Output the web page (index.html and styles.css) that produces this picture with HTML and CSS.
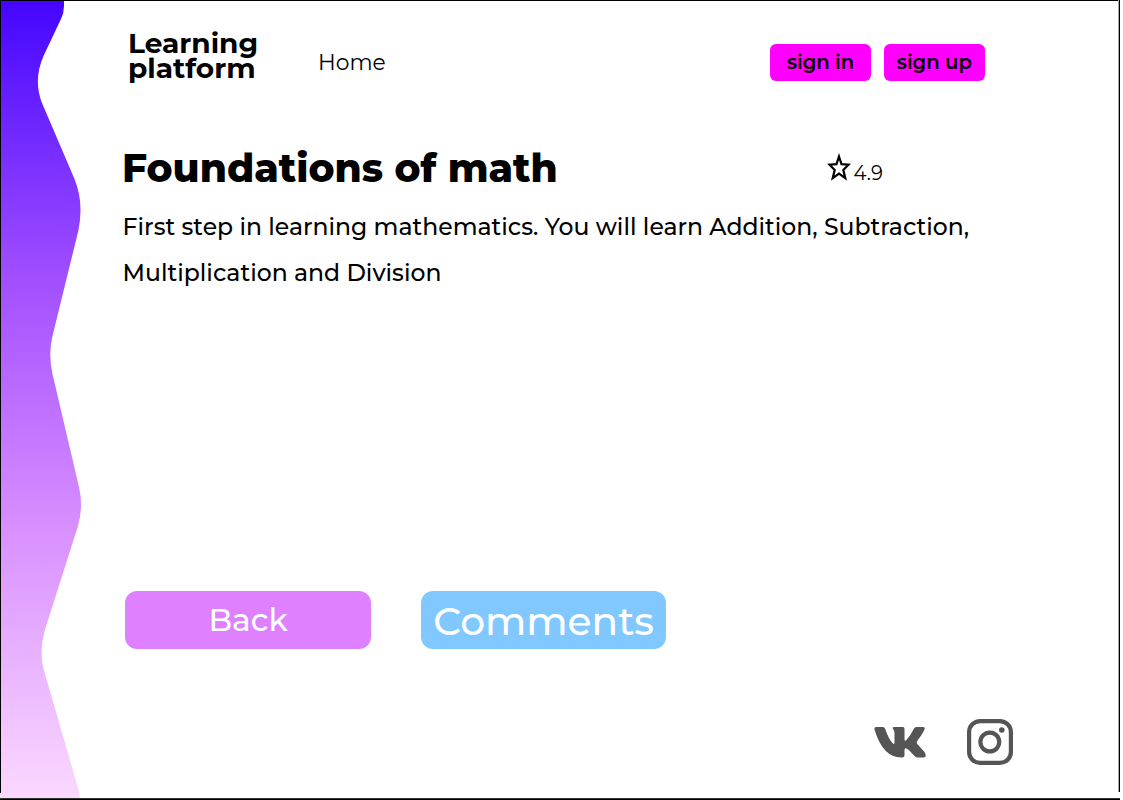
FILE: index.html
```html
<!DOCTYPE html>
<html lang="en">
<head>
<meta charset="utf-8">
<title>Learning platform</title>
<link rel="stylesheet" href="styles.css">
</head>
<body>
<div class="page">
  <svg class="wave" width="84" height="800" viewBox="0 0 84 800" aria-hidden="true">
    <defs>
      <linearGradient id="waveFill" x1="0" y1="0" x2="0" y2="1">
        <stop offset="0" stop-color="#4405ff"/>
        <stop offset="0.34" stop-color="#9f4dff"/>
        <stop offset="0.66" stop-color="#d88fff"/>
        <stop offset="1" stop-color="#fad8ff"/>
      </linearGradient>
    </defs>
    <path fill="url(#waveFill)" d="M0 0H64V6Q64 13 61 19L43.500 56Q33 80 42 103L74.500 179Q84 202 78.500 230L52.500 336Q48 354 52.500 374L79 487Q83.500 506 78 526L45.500 628Q38 653 45 674L79.500 793V798H0Z"/>
  </svg>
  <main class="content">
    <header class="top">
      <a class="logo">Learning<br>platform</a>
      <nav><a class="home">Home</a></nav>
      <div class="auth">
        <button class="sign">sign in</button>
        <button class="sign">sign up</button>
      </div>
    </header>
    <div class="heading">
      <h1>Foundations of math</h1>
      <div class="rating">
        <svg width="24" height="30" viewBox="0 0 24 30" aria-hidden="true"><path fill="none" stroke="#000" stroke-width="2.200" d="M12 3.500L14.500 11.200L21.500 11.700L16.300 17L18.300 25.200L12 20.700L5.700 25.200L7.700 17L2.500 11.700L9.500 11.200Z"/></svg>
        <span class="score">4.9</span>
      </div>
    </div>
    <p class="about">First step in learning mathematics. You will learn Addition, Subtraction,<br>Multiplication and Division</p>
    <div class="actions">
      <button class="action back">Back</button>
      <button class="action comments">Comments</button>
    </div>
    <footer class="social">
      <svg width="52" height="34" viewBox="0 0 52 34" role="img" aria-label="VK"><path fill="#555" d="M2 1H9Q10.500 1 11 2.500Q15 14 19 17.500Q20.500 18.700 20.500 16.500V7Q20.500 4.500 18.900 2.800Q18 1 20 1H29Q30.500 1 30.500 3V13Q30.500 15.500 32 14.400Q36.500 10 40 2.500Q40.700 1 42.500 1H49Q51.500 1 50.500 3.500Q48.500 8 43.500 14.500Q42 16.500 43.500 18.200L50.500 26Q53.500 31.500 49.500 31.500H44Q42 31.500 40.500 30L34.500 23.700Q30.500 20.500 30.500 24V29.500Q30.500 31.500 28 31.500Q9 32 .5 3.500Q0 1 2 1Z"/></svg>
      <svg width="46" height="46" viewBox="0 0 46 46" role="img" aria-label="Instagram"><rect x="2.100" y="2.100" width="41.800" height="41.800" rx="11" fill="none" stroke="#555" stroke-width="4.200"/><circle cx="22.800" cy="23" r="9.400" fill="none" stroke="#555" stroke-width="4.200"/><circle cx="34.800" cy="11" r="2.800" fill="#555"/></svg>
    </footer>
  </main>
  <div class="edge edge-top"></div>
  <div class="edge edge-left"></div>
  <div class="edge edge-right"></div>
  <div class="edge edge-bottom"></div>
</div>
</body>
</html>
```
FILE: styles.css
```css
* { box-sizing: border-box; }
body { margin: 0; background: #fff; color: #000; font-family: Montserrat, Inter, "Liberation Sans", sans-serif; }
.page { position: relative; width: 1123px; height: 800px; overflow: hidden; display: flex; }
.wave { flex: none; display: block; }
.content { width: 1036px; padding: 31px 0 0 38px; display: flex; flex-direction: column; }
h1, .about, .home, .score { white-space: nowrap; }
.top { display: flex; height: 56px; }
.logo { width: 196px; padding-left: 6px; font-size: 28px; font-weight: 700; line-height: 25px; }
.home { display: block; padding-top: 19px; font-size: 21.800px; font-weight: 400; line-height: 25px; }
.auth { display: flex; gap: 12.500px; margin-left: auto; padding: 12.500px 135px 0 0; }
.sign { width: 101.300px; height: 37.500px; padding: 0; border: 0; border-radius: 6px; background: #f0f; color: #000; font: 600 19.600px/36px Montserrat, Inter, sans-serif; text-align: center; }
.heading { display: flex; height: 70px; margin-top: 56px; }
h1 { margin: 0; width: 705.400px; font-size: 39.050px; font-weight: 800; line-height: 50px; }
.rating { display: flex; padding-top: 9.500px; gap: 2px; }
.score { font-size: 19.600px; font-weight: 400; line-height: 41px; }
.about { margin: -9.200px 0 0 .6px; font-size: 23.530px; font-weight: 500; line-height: 46.500px; }
.actions { display: flex; gap: 50px; margin: 294.500px 0 0 3.300px; }
.action { width: 245.500px; height: 58px; padding: 0; border: 0; border-radius: 12px; color: #fff; font: 500 31.300px/58px Montserrat, Inter, sans-serif; text-align: center; }
.back { background: #de80ff; }
.comments { background: #80c8ff; font-size: 39.100px; line-height: 60px; }
.social { display: flex; justify-content: flex-end; gap: 41px; margin: 69.700px 107.200px 0 0; }
.social svg:first-child { margin-top: 6.500px; }
.edge { position: absolute; background: #000; }
.edge-top { left: 0; top: 0; width: 1120px; height: 1px; }
.edge-left { left: 0; top: 0; width: 1px; height: 793px; }
.edge-right { left: 1118px; top: 0; width: 2px; height: 792px; border-left: 1px solid #aaa; }
.edge-bottom { left: 0; top: 798px; width: 1120px; height: 2px; border-top: 1px solid #333; }
```
